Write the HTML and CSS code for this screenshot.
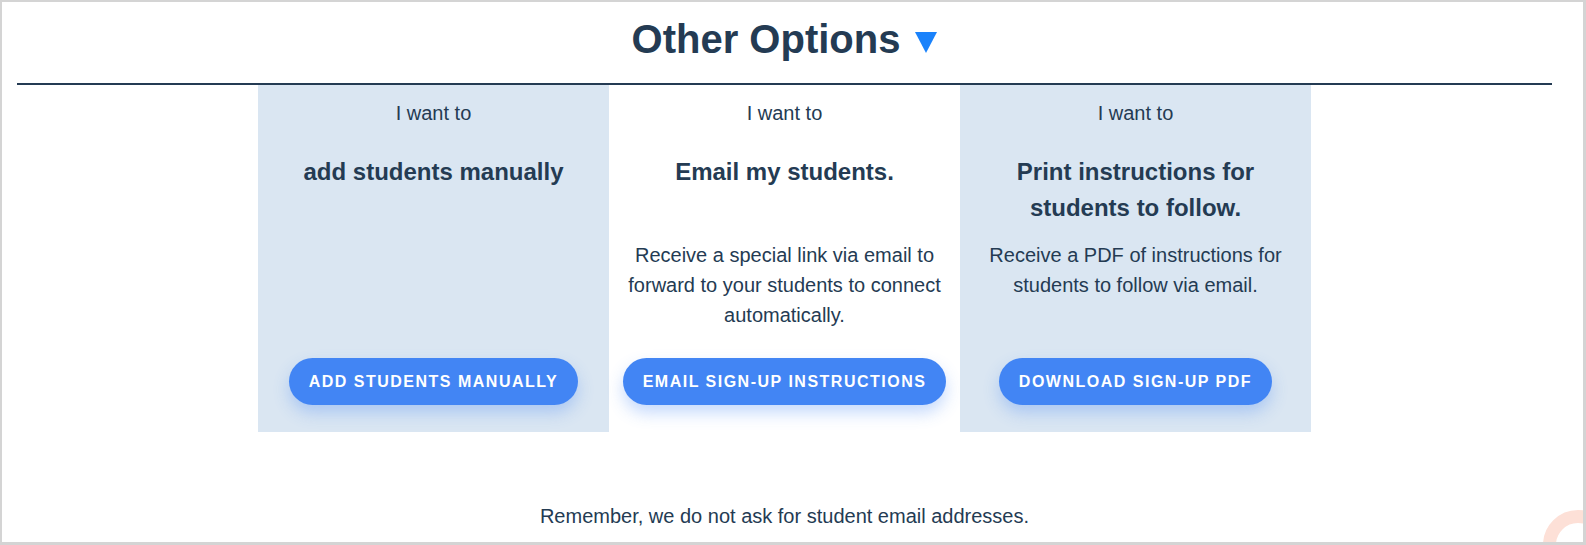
FILE: index.html
```html
<!DOCTYPE html>
<html lang="en">
<head>
    <meta charset="UTF-8">
    <meta name="viewport" content="width=device-width, initial-scale=1.0">
    <title>Other Options</title>
    <link rel="stylesheet" href="styles.css">
</head>
<body>
    <div class="frame">
        <h1 class="title">Other Options<svg class="caret" width="22" height="21" viewBox="0 0 22 21"><polygon points="0,0 22,0 11,21" fill="#1a82fb"/></svg></h1>

        <div class="options">
            <div class="option shaded">
                <p class="lead">I want to</p>
                <h2>add students manually</h2>
                <p class="desc"></p>
                <button>Add students manually</button>
            </div>

            <div class="option">
                <p class="lead">I want to</p>
                <h2>Email my students.</h2>
                <p class="desc">Receive a special link via email to forward to your students to connect automatically.</p>
                <button>Email sign-up instructions</button>
            </div>

            <div class="option shaded">
                <p class="lead">I want to</p>
                <h2>Print instructions for students to follow.</h2>
                <p class="desc">Receive a PDF of instructions for students to follow via email.</p>
                <button>Download sign-up PDF</button>
            </div>
        </div>

        <p class="note">Remember, we do not ask for student email addresses.</p>

        <div class="help-ring"></div>
    </div>
</body>
</html>
```

FILE: styles.css
```css
html, body {
    margin: 0;
    padding: 0;
    height: 100%;
}
body {
    font-family: "Liberation Sans", Arial, sans-serif;
    font-size: 20px;
    color: #243b53;
    background-color: #ffffff;
}
.frame {
    position: relative;
    box-sizing: border-box;
    height: 100vh;
    border: 2px solid #d4d4d4;
    border-right-width: 3px;
    border-bottom-width: 3px;
    padding: 0 31px 0 15px;
    overflow: hidden;
}
.title {
    margin: 0;
    padding: 14px 0 21px;
    font-size: 40px;
    line-height: 46px;
    font-weight: bold;
    text-align: center;
    border-bottom: 2px solid #243b53;
}
.caret {
    margin-left: 15px;
    vertical-align: baseline;
}
.options {
    display: grid;
    grid-template-columns: repeat(3, 351px);
    justify-content: center;
}
.option {
    display: flex;
    flex-direction: column;
    align-items: center;
    text-align: center;
    padding: 13px 14px 27px;
}
.option.shaded {
    background-color: #dae6f2;
}
.lead {
    margin: 0;
    line-height: 30px;
}
.option h2 {
    margin: 26px 0 0;
    min-height: 72px;
    font-size: 24px;
    line-height: 36px;
    font-weight: bold;
}
.desc {
    margin: 14px 0 28px;
    line-height: 30px;
}
button {
    margin-top: auto;
    padding: 14px 20px;
    font-family: inherit;
    font-size: 16px;
    line-height: 19px;
    font-weight: bold;
    letter-spacing: 1.5px;
    text-transform: uppercase;
    white-space: nowrap;
    color: #ffffff;
    background-color: #4285f4;
    border: none;
    border-radius: 24px;
    box-shadow: 0 8px 16px rgba(66, 133, 244, 0.3);
    cursor: pointer;
}
button:hover {
    background-color: #3574e0;
}
.note {
    margin: 69px 0 0;
    line-height: 30px;
    text-align: center;
}
.help-ring {
    position: absolute;
    left: 1541px;
    top: 508px;
    width: 70px;
    height: 70px;
    box-sizing: border-box;
    border: 13px solid #fde0d7;
    border-radius: 50%;
}
```
